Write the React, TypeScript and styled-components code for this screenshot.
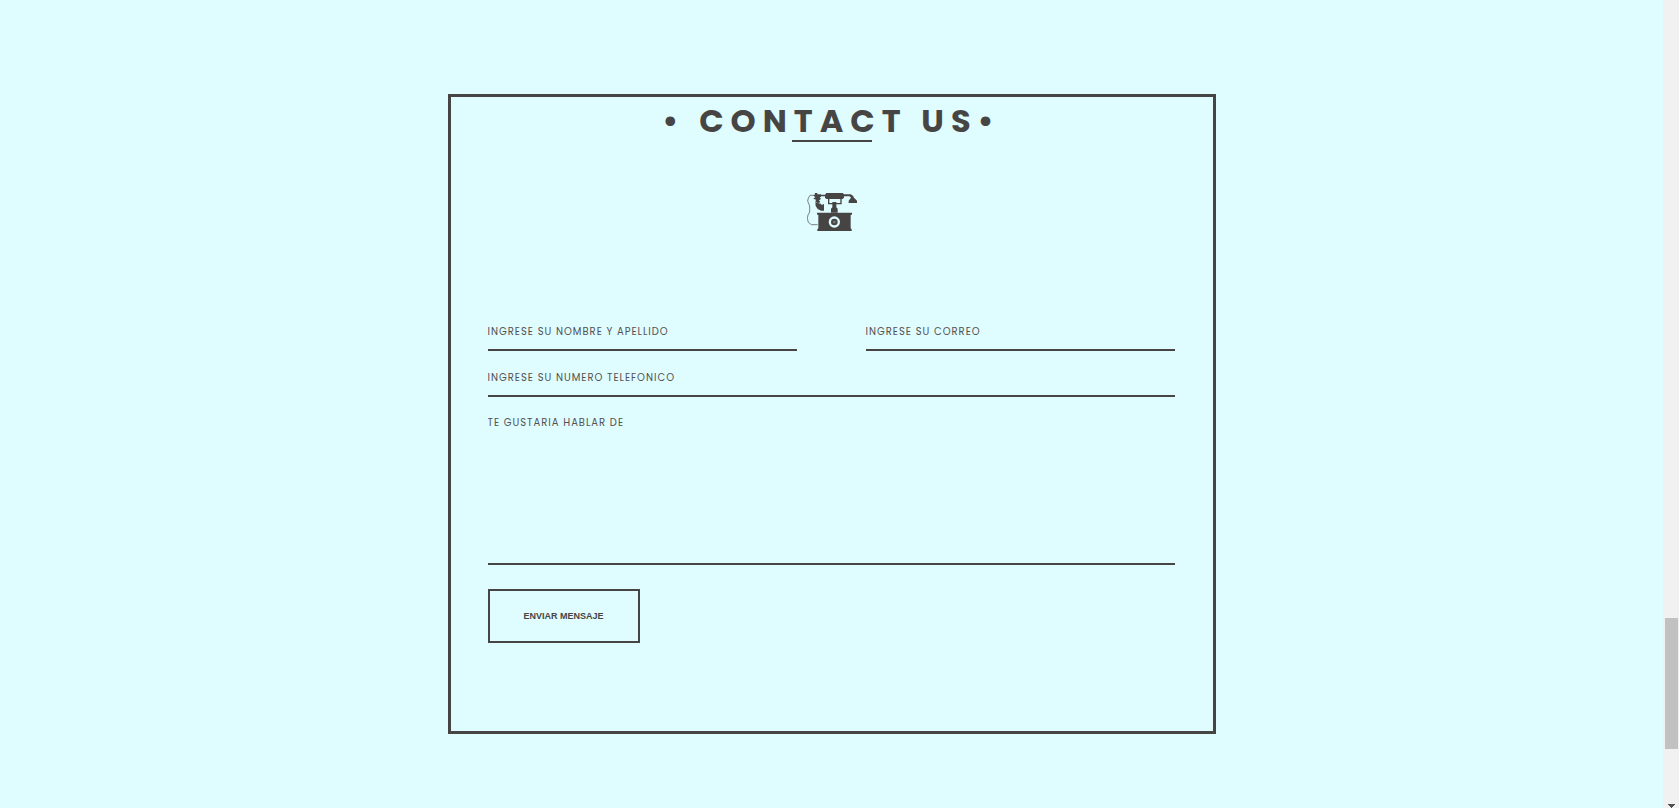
import React from "react";
import styled, { createGlobalStyle } from "styled-components";

const ink = "#474544";
const paper = "#dffcff";

const GlobalStyle = createGlobalStyle`
  *, *::before, *::after { box-sizing: border-box; }
  body { margin: 0; background: ${paper}; color: ${ink}; }
`;

const Page = styled.div`
  display: grid;
  grid-template-columns: minmax(0, 1fr) 16px;
  min-height: 100vh;
`;

const Content = styled.main`
  padding: 94px 16px 64px;
`;

const Card = styled.section`
  width: 100%;
  max-width: 768px;
  min-height: 640px;
  margin: 0 auto;
  padding-bottom: 88px;
  border: 3px solid ${ink};
`;

const Title = styled.h1`
  margin: 0;
  padding-top: 4px;
  font: 700 32px/40px Poppins, Inter, sans-serif;
  letter-spacing: 7px;
  text-align: center;
  text-transform: uppercase;
  white-space: pre;
`;

const Underline = styled.hr`
  width: 80px;
  height: 2px;
  margin: -1px auto 0;
  border: 0;
  background: ${ink};
`;

const Phone = styled.svg`
  display: block;
  width: 50px;
  height: 40px;
  margin: 50px auto 84px;
`;

const Form = styled.form`
  display: grid;
  grid-template-columns: 1fr 1fr;
  column-gap: 69px;
  padding: 0 38px 0 37px;
`;

const Field = styled.input<{ $wide?: boolean }>`
  grid-column: ${(p) => (p.$wide ? "1 / -1" : "auto")};
  width: 100%;
  min-width: 0;
  height: 35px;
  margin: 0 0 11px;
  padding: 0 0 2px;
  border: 0;
  border-bottom: 2px solid ${ink};
  border-radius: 0;
  outline: 0;
  background: none;
  color: ${ink};
  font: 400 10px/15px Poppins, Lato, sans-serif;
  letter-spacing: 1px;
  text-transform: uppercase;

  &::placeholder { color: #535251; opacity: 1; }
`;

const Message = styled.textarea`
  grid-column: 1 / -1;
  width: 100%;
  height: 157px;
  margin: 0 0 24px;
  padding: 7px 0;
  border: 0;
  border-bottom: 2px solid ${ink};
  outline: 0;
  resize: none;
  background: none;
  color: ${ink};
  font: 400 10px/15px Poppins, Lato, sans-serif;
  letter-spacing: 1px;
  text-transform: uppercase;

  &::placeholder { color: #535251; opacity: 1; }
`;

const Submit = styled.button`
  grid-column: 1 / -1;
  justify-self: start;
  width: 152px;
  height: 54px;
  padding: 0;
  border: 2px solid ${ink};
  background: none;
  color: ${ink};
  font: 700 9px/12px "Liberation Sans", Arial, sans-serif;
  text-transform: uppercase;
  cursor: pointer;
`;

const Track = styled.div`
  position: sticky;
  top: 0;
  display: flex;
  flex-direction: column;
  align-items: center;
  height: 100vh;
  background: #f1f1f1;
`;

const Thumb = styled.div`
  width: 13px;
  height: 131px;
  margin: auto 0 55px;
  background: #c1c1c1;
`;

const Arrow = styled.svg`
  display: block;
  width: 7px;
  height: 4px;
`;

export default function App() {
  return (
    <>
      <GlobalStyle />
      <Page>
        <Content>
          <Card>
            <Title>{"• Contact us•"}</Title>
            <Underline />
            <Phone viewBox="33 30 150 120" fill={ink} aria-hidden="true">
              <path d="M91 33h49l4 4h20l7 4 3 6 9 9v7h-25v-7l7-9-4-4h-17v4l-4 4H91l-4-4v-4H75v-5h12z" />
              <path d="M96 50h4v13h9v-3h12v3h12V50h4v17h-16v9l4 4v12h-20V80l4-4v-9H96z" />
              <path d="M56 33h8v4h11v8h-4l4 6-6 4 4 5-7 4-8-5 2-6-8-3 6-5-6-4 5-4z" />
              <path d="M58 61l10 3 7 1 2 4 7-3v20h-9l-10-5-6-9z" />
              <path d="M63 92h105v6h-4v41l3 3v5H64v-5l3-3V98h-4z" />
              <circle cx="115" cy="120" r="17" fill={paper} />
              <circle cx="115" cy="120" r="10" />
              <circle cx="115" cy="120" r="4" fill={paper} fillOpacity="0.3" />
              <path
                d="M56 40H42l-5 8-2 9 6 15v18l-5 9-2 10 3 12 9 7h19"
                fill="none"
                stroke={ink}
                strokeWidth="2"
              />
            </Phone>
            <Form onSubmit={(e) => e.preventDefault()}>
              <Field type="text" name="name" aria-label="Ingrese su nombre y apellido" placeholder="Ingrese su nombre y apellido" />
              <Field type="email" name="email" aria-label="Ingrese su correo" placeholder="Ingrese su correo" />
              <Field $wide type="tel" name="phone" aria-label="Ingrese su numero telefonico" placeholder="Ingrese su numero telefonico" />
              <Message name="message" aria-label="Te gustaria hablar de" placeholder="Te gustaria hablar de" />
              <Submit type="submit">Enviar mensaje</Submit>
            </Form>
          </Card>
        </Content>
        <Track aria-hidden="true">
          <Thumb />
          <Arrow viewBox="0 0 7 4" fill="#505050" shapeRendering="crispEdges">
            <path d="M0 0h7v1H6v1H5v1H4v1H3V3H2V2H1V1H0z" />
          </Arrow>
        </Track>
      </Page>
    </>
  );
}
